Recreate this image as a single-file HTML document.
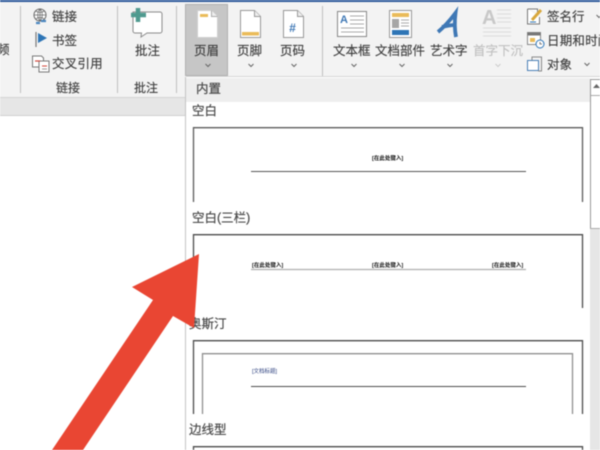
<!DOCTYPE html>
<html><head><meta charset="utf-8">
<style>
html,body{margin:0;padding:0;background:#fff}
#p{position:relative;width:600px;height:450px;overflow:hidden;background:#fff;font-family:"Liberation Sans","Noto Sans CJK SC",sans-serif;color:#3e3e3e;filter:blur(.45px)}
#p div,#p span.t{position:absolute}
.t{position:absolute;white-space:nowrap;line-height:16px;font-size:12.5px;-webkit-text-stroke:.15px currentColor}
.h{font-size:12.5px;color:#4a4a4a;-webkit-text-stroke:.2px #4a4a4a}
.ch{position:absolute;width:8px;height:5px}
.tiny{font-size:5.5px;line-height:6px;color:#111;white-space:nowrap;font-weight:bold}
svg{position:absolute;overflow:visible}
</style></head><body><div id="p">
<div style="left:0;top:0;width:600px;height:2px;background:#2b579a"></div>
<div style="left:0;top:2px;width:600px;height:75px;background:#f3f3f3"></div>
<div style="left:0;top:77px;width:186px;height:20px;background:#f3f3f3"></div>
<div style="left:0;top:97px;width:186px;height:1px;background:#d4d4d4"></div>
<div style="left:0;top:98px;width:186px;height:17px;background:#e6e6e6"></div>
<div style="left:0;top:115px;width:186px;height:1px;background:#d0d0d0"></div>
<div style="left:186px;top:76px;width:414px;height:1px;background:#d6d6d6"></div>

<!-- separators -->
<div style="left:20px;top:6px;width:1px;height:87px;background:#c0c0c0"></div>
<div style="left:117px;top:6px;width:1px;height:87px;background:#c0c0c0"></div>
<div style="left:176px;top:6px;width:1px;height:87px;background:#c0c0c0"></div>
<div style="left:322px;top:6px;width:1px;height:70px;background:#c0c0c0"></div>

<span class="t" style="left:-3px;top:42px">频</span>

<!-- link column -->
<svg style="left:32px;top:8px" width="18" height="18" viewBox="0 0 18 18"><circle cx="8" cy="7" r="6" fill="#fff" stroke="#666" stroke-width="1"/><path d="M2 7h12M8 1v12M4 3c2 2 6 2 8 0M4 11c2-2 6-2 8 0M8 1c-3 3-3 9 0 12M8 1c3 3 3 9 0 12" fill="none" stroke="#666" stroke-width=".7"/><path d="M4 15h4M9 13h5" stroke="#4a86c0" stroke-width="2.2" fill="none"/></svg>
<span class="t" style="left:52px;top:9px">链接</span>
<svg style="left:35px;top:32px" width="14" height="16" viewBox="0 0 14 16"><path d="M1 0v15" stroke="#777" stroke-width="1.2"/><path d="M3 1l9 5-9 5z" fill="#2e75b6"/></svg>
<span class="t" style="left:52px;top:33px">书签</span>
<svg style="left:32px;top:55px" width="18" height="18" viewBox="0 0 18 18"><path d="M.5 1h9l2 2v9h-11z" fill="#fff" stroke="#777"/><path d="M7 6h10v11H7z" fill="#fff" stroke="#777"/><path d="M3 6h5" stroke="#d0453a" stroke-width="1.2"/><path d="M10 11h5" stroke="#d0453a"/><path d="M10 14h5" stroke="#999"/></svg>
<span class="t" style="left:52px;top:56px;letter-spacing:.2px">交叉引用</span>
<span class="t" style="left:56px;top:80px;font-size:12px">链接</span>

<!-- comment -->
<svg style="left:130px;top:7px" width="34" height="32" viewBox="0 0 34 32"><path d="M3 5h27a2 2 0 0 1 2 2v17a2 2 0 0 1-2 2H17l-6 4 .5-4H5a2 2 0 0 1-2-2z" fill="#fff" stroke="#8a8a8a" stroke-width="1"/><path d="M8 1v14M1 8h15" stroke="#4f9a8f" stroke-width="4.500"/></svg>
<span class="t" style="left:135px;top:43px">批注</span>
<span class="t" style="left:134px;top:80px;font-size:12px">批注</span>

<!-- header active -->
<div style="left:185px;top:4px;width:43px;height:72px;background:#c6c6c6;border:1px solid #b0b0b0;box-sizing:border-box"></div>
<svg style="left:197px;top:10px" width="21" height="28" viewBox="0 0 21 28"><path d="M.5.500h14l6 6v21H.5z" fill="#fff" stroke="#cfcfcf"/><path d="M14.500.500v6h6" fill="#eee" stroke="#aaa"/><rect x="3" y="4" width="8" height="3" fill="#eabb5a"/></svg>
<span class="t" style="left:194px;top:43px">页眉</span>
<svg class="ch" style="left:204px;top:63px" viewBox="0 0 8 5"><path d="M1.500 1L4 3.500 6.500 1" fill="none" stroke="#666" stroke-width="1"/></svg>

<svg style="left:240px;top:10px" width="21" height="28" viewBox="0 0 21 28"><path d="M.5.500h14l6 6v21H.5z" fill="#fff" stroke="#999"/><path d="M14.500.500v6h6" fill="#eee" stroke="#999"/><rect x="2" y="22" width="17" height="3.500" fill="#eabb5a"/></svg>
<span class="t" style="left:237px;top:43px">页脚</span>
<svg class="ch" style="left:247px;top:63px" viewBox="0 0 8 5"><path d="M1.500 1L4 3.500 6.500 1" fill="none" stroke="#666" stroke-width="1"/></svg>

<svg style="left:283px;top:10px" width="21" height="28" viewBox="0 0 21 28"><path d="M.5.500h14l6 6v21H.5z" fill="#fff" stroke="#999"/><path d="M14.500.500v6h6" fill="#eee" stroke="#999"/></svg>
<span style="position:absolute;left:289px;top:21px;font-size:12px;line-height:14px;font-style:italic;font-weight:bold;color:#3f78b5">#</span>
<span class="t" style="left:280px;top:43px">页码</span>
<svg class="ch" style="left:290px;top:63px" viewBox="0 0 8 5"><path d="M1.500 1L4 3.500 6.500 1" fill="none" stroke="#666" stroke-width="1"/></svg>

<!-- textbox -->
<svg style="left:337px;top:11px" width="30" height="26" viewBox="0 0 30 26"><rect x=".5" y=".5" width="29" height="25" fill="#fff" stroke="#888"/><path d="M13 5h14M13 9h14M13 13h14M4 17h23M4 21h23" stroke="#aaa" stroke-width="1"/></svg>
<span style="position:absolute;left:340px;top:13px;font-size:11px;line-height:14px;font-weight:bold;color:#3f78b5">A</span>
<span class="t" style="left:333px;top:43px">文本框</span>
<svg class="ch" style="left:350px;top:63px" viewBox="0 0 8 5"><path d="M1.500 1L4 3.500 6.500 1" fill="none" stroke="#666" stroke-width="1"/></svg>

<svg style="left:389px;top:10px" width="23" height="28" viewBox="0 0 23 28"><rect x=".5" y=".5" width="22" height="27" fill="#fff" stroke="#999"/><rect x="3" y="3" width="17" height="4" fill="#eabb5a"/><rect x="3" y="9" width="7" height="9" fill="#a6a6a6"/><path d="M12 10h8M12 13h8M12 16h8" stroke="#aaa"/><rect x="3" y="20" width="17" height="5" fill="#2e75b6"/></svg>
<span class="t" style="left:375px;top:43px">文档部件</span>
<svg class="ch" style="left:398px;top:63px" viewBox="0 0 8 5"><path d="M1.500 1L4 3.500 6.500 1" fill="none" stroke="#666" stroke-width="1"/></svg>

<svg style="left:436px;top:11px" width="22" height="27" viewBox="0 0 22 27"><path d="M2 21C8 16 15 8 19.500 2c-1 8-1 16 .5 24M6 16c4-1 9-2 13-2" fill="none" stroke="#3f78b5" stroke-width="3.800"/></svg>
<span class="t" style="left:430px;top:43px">艺术字</span>
<svg class="ch" style="left:446px;top:63px" viewBox="0 0 8 5"><path d="M1.500 1L4 3.500 6.500 1" fill="none" stroke="#666" stroke-width="1"/></svg>

<span style="position:absolute;left:482px;top:7px;font-size:20px;line-height:22px;font-weight:bold;color:#c8c8c8">A</span>
<svg style="left:482px;top:9px" width="30" height="30" viewBox="0 0 30 30"><path d="M15 1h14M15 5h14M15 9h14M15 13h14M1 19h28M1 23h28M1 27h28" stroke="#dcdcdc"/></svg>
<span class="t" style="left:473px;top:43px;color:#c0c0c0">首字下沉</span>
<svg class="ch" style="left:494px;top:63px" viewBox="0 0 8 5"><path d="M1.500 1L4 3.500 6.500 1" fill="none" stroke="#ccc" stroke-width="1"/></svg>

<!-- right col -->
<svg style="left:527px;top:8px" width="18" height="17" viewBox="0 0 18 17"><path d="M.5 1h10v3M.5 1v15h12V9" fill="#fff" stroke="#777"/><path d="M5 12L14 2" stroke="#d8a73c" stroke-width="3"/><path d="M3 14h6" stroke="#2e75b6" stroke-width="1"/></svg>
<span class="t" style="left:547px;top:9px">签名行</span>
<svg class="ch" style="left:595px;top:14px" viewBox="0 0 8 5"><path d="M1.500 1L4 3.500 6.500 1" fill="none" stroke="#666"/></svg>
<svg style="left:527px;top:32px" width="18" height="17" viewBox="0 0 18 17"><rect x=".5" y=".5" width="13" height="12" fill="#fff" stroke="#888"/><rect x=".5" y=".5" width="13" height="3" fill="#777"/><rect x="3" y="6" width="5" height="4" fill="#eabb5a"/><circle cx="13" cy="12" r="4" fill="#fff" stroke="#2e75b6"/><path d="M13 10v2h2" stroke="#555" fill="none" stroke-width=".8"/></svg>
<span class="t" style="left:547px;top:33px;letter-spacing:.2px">日期和时间</span>
<svg style="left:527px;top:56px" width="16" height="16" viewBox="0 0 16 16"><rect x=".5" y="4.500" width="11" height="10" fill="#fff" stroke="#4a7fb5"/><path d="M5 4V1h9.500v14H11" fill="none" stroke="#888"/></svg>
<span class="t" style="left:547px;top:57px">对象</span>
<svg class="ch" style="left:583px;top:62px" viewBox="0 0 8 5"><path d="M1.500 1L4 3.500 6.500 1" fill="none" stroke="#666" stroke-width="1"/></svg>

<!-- gallery -->
<div style="left:185px;top:77px;width:1px;height:373px;background:#c4c4c4"></div>
<div style="left:186px;top:77px;width:404px;height:373px;background:#fff"></div>
<div style="left:186px;top:78px;width:404px;height:24px;background:#eeeeee"></div>
<span class="t h" style="left:196px;top:81px">内置</span>

<div style="left:590px;top:79px;width:10px;height:149px;background:#fff;border-left:1px solid #999;border-top:1px solid #999;box-sizing:border-box"></div>
<div style="left:591px;top:95px;width:9px;height:1px;background:#aaa"></div>
<svg style="left:593px;top:84px" width="7" height="4" viewBox="0 0 7 4"><path d="M0 4L3.500 0 7 4z" fill="#666"/></svg>
<div style="left:590px;top:228px;width:10px;height:222px;background:#e6e6e6;border-top:1px solid #aaa;box-sizing:border-box"></div>

<!-- gallery thumbnails -->
<svg style="left:0;top:0" width="600" height="450" viewBox="0 0 600 450">
<g fill="none" stroke-width="1.300">
<path d="M193.500 202V127.700H582.500V202" stroke="#5c5c5c"/>
<path d="M251 171.500H526" stroke="#555" stroke-width="1.100"/>
<path d="M193.500 308V234.700H582.500V308" stroke="#4c4c4c"/>
<path d="M251 269.500H526" stroke="#b0b0b0" stroke-width="1.200"/>
<path d="M193.500 414V340.700H582.500V414" stroke="#4c4c4c"/>
<path d="M202.500 414V353.700H572.500V414" stroke="#909090"/>
<path d="M251 386.500H526" stroke="#4c4c4c" stroke-width="1.100"/>
<path d="M193.500 450V446.700H582.500V450" stroke="#4c4c4c"/>
</g></svg>

<!-- item 1 -->
<span class="t h" style="left:192px;top:103px">空白</span>
<div class="tiny" style="left:372px;top:156px">[在此处键入]</div>

<!-- item 2 -->
<span class="t h" style="left:192px;top:210px">空白(三栏)</span>
<div class="tiny" style="left:252px;top:263px">[在此处键入]</div>
<div class="tiny" style="left:372px;top:263px">[在此处键入]</div>
<div class="tiny" style="left:492px;top:263px">[在此处键入]</div>

<!-- item 3 -->
<span class="t h" style="left:189px;top:316px">奥斯汀</span>
<div class="tiny" style="left:252px;top:369px;color:#2b3f7e;font-weight:normal">[文档标题]</div>

<!-- item 4 -->
<span class="t h" style="left:189px;top:422px">边线型</span>

<!-- arrow -->
<svg style="left:0;top:0" width="600" height="450" viewBox="0 0 600 450"><path d="M199 254L194 328 173 316 83 450 52 450 153 300 132 287z" fill="#e94633"/></svg>
</div></body></html>
